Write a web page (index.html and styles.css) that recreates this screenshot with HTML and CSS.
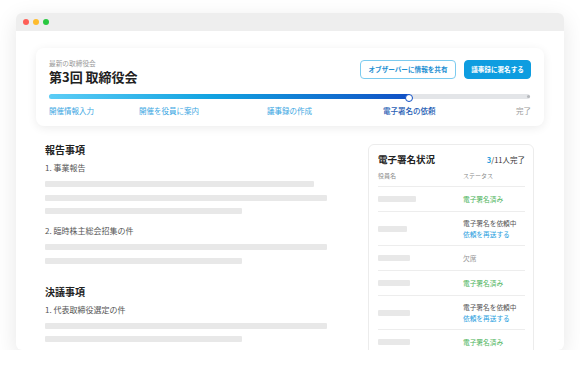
FILE: index.html
```html
<!DOCTYPE html>
<html lang="ja">
<head>
    <meta charset="UTF-8">
    <meta name="viewport" content="width=device-width, initial-scale=1.0">
    <title>第3回 取締役会</title>
    <link rel="stylesheet" href="styles.css">
</head>
<body>

    <div class="window">

        <div class="titlebar">
            <span class="dot red"></span>
            <span class="dot yellow"></span>
            <span class="dot green"></span>
        </div>

        <div class="content">

            <div class="meetingCard">
                <div class="meetingTop">
                    <div>
                        <div class="meetingLabel">最新の取締役会</div>
                        <h1 class="meetingTitle">第3回 取締役会</h1>
                    </div>
                    <div class="actions">
                        <button class="btn btnOutline">オブザーバーに情報を共有</button>
                        <button class="btn btnFilled">議事録に署名する</button>
                    </div>
                </div>

                <div class="track">
                    <div class="trackFill"></div>
                    <span class="trackEnd"></span>
                </div>

                <div class="steps">
                    <span class="step done step1">開催情報入力</span>
                    <span class="step done step2">開催を役員に案内</span>
                    <span class="step done step3">議事録の作成</span>
                    <span class="step current step4">電子署名の依頼</span>
                    <span class="step todo">完了</span>
                </div>
            </div>

            <div class="main">

                <div class="agenda">
                    <h2 class="sectionTitle">報告事項</h2>
                    <div class="item">1. 事業報告</div>
                    <div class="line long"></div>
                    <div class="line full"></div>
                    <div class="line short"></div>

                    <div class="item">2. 臨時株主総会招集の件</div>
                    <div class="line full"></div>
                    <div class="line short"></div>

                    <h2 class="sectionTitle second">決議事項</h2>
                    <div class="item">1. 代表取締役選定の件</div>
                    <div class="line full"></div>
                    <div class="line short"></div>
                </div>

                <div class="signPanel">
                    <div class="panelHead">
                        <span class="panelTitle">電子署名状況</span>
                        <span class="panelCount"><span class="countDone">3</span>/11人完了</span>
                    </div>
                    <div class="row headRow">
                        <span>役員名</span>
                        <span>ステータス</span>
                    </div>
                    <div class="row">
                        <span class="name" style="width:38px"></span>
                        <span class="status signed">電子署名済み</span>
                    </div>
                    <div class="row">
                        <span class="name" style="width:29px"></span>
                        <span class="status">電子署名を依頼中<br><span class="resend">依頼を再送する</span></span>
                    </div>
                    <div class="row">
                        <span class="name" style="width:32px"></span>
                        <span class="status absent">欠席</span>
                    </div>
                    <div class="row">
                        <span class="name" style="width:32px"></span>
                        <span class="status signed">電子署名済み</span>
                    </div>
                    <div class="row">
                        <span class="name" style="width:32px"></span>
                        <span class="status">電子署名を依頼中<br><span class="resend">依頼を再送する</span></span>
                    </div>
                    <div class="row">
                        <span class="name" style="width:32px"></span>
                        <span class="status signed">電子署名済み</span>
                    </div>
                </div>

            </div>
        </div>
    </div>

</body>
</html>
```

FILE: styles.css
```css
:root{
    --font-primary: "Noto Sans CJK JP", "Noto Sans", sans-serif;
    --blue: #0e9de0;
    --blue-text: #2a9fe0;
    --green: #4cb45a;
    --skeleton: #e8e8e8;
}

*{
    box-sizing: border-box;
}

body{
    margin: 0;
    background: #fff;
    font-family: var(--font-primary);
    color: #333;
}

.window{
    width: 548px;
    height: 337px;
    margin: 13px 0 0 16px;
    background: #fff;
    border-radius: 6px;
    overflow: hidden;
    box-shadow: 0 6px 22px rgba(0, 0, 0, 0.1);
}

.titlebar{
    height: 18px;
    background: #eeeeee;
    display: flex;
    align-items: center;
    gap: 4px;
    padding-left: 7px;
}

.dot{
    width: 6px;
    height: 6px;
    border-radius: 50%;
}
.red{ background: #fe5f57; }
.yellow{ background: #febc2e; }
.green{ background: #28c840; }

.content{
    padding: 17px 20px 0 20px;
}

/* meeting card */

.meetingCard{
    border-radius: 8px;
    box-shadow: 0 2px 10px rgba(0, 0, 0, 0.08);
    padding: 10px 13px 10px 13px;
}

.meetingTop{
    display: flex;
    justify-content: space-between;
    align-items: flex-start;
}

.meetingLabel{
    font-size: 6.7px;
    line-height: 10px;
    color: #999;
}

.meetingTitle{
    margin: 0;
    font-size: 13px;
    line-height: 18px;
    font-weight: 700;
    color: #222;
}

.actions{
    display: flex;
    gap: 8px;
    margin-top: 2px;
}

.btn{
    height: 19px;
    padding: 0;
    border-radius: 4px;
    font-family: var(--font-primary);
    font-size: 6.6px;
    font-weight: 700;
    line-height: 1;
    white-space: nowrap;
    text-align: center;
}

.btnOutline{
    width: 96px;
    background: #fff;
    border: 1px solid #7ccbef;
    color: #1d8fd2;
}

.btnFilled{
    width: 67px;
    background: var(--blue);
    border: 1px solid var(--blue);
    color: #fff;
}

.track{
    position: relative;
    height: 5px;
    margin-top: 8px;
    margin-right: 1px;
    border-radius: 3px;
    background: #e3e5e8;
}

.trackFill{
    position: relative;
    width: 75%;
    height: 100%;
    border-radius: 3px;
    background: linear-gradient(90deg, #5ccdf6 0%, #12a3e1 45%, #1150c5 100%);
}

.trackFill::after{
    content: "";
    position: absolute;
    right: -3px;
    top: -0.5px;
    width: 6px;
    height: 6px;
    border-radius: 50%;
    background: #fff;
    border: 1.5px solid #1150c5;
}

.trackEnd{
    position: absolute;
    right: 0.5px;
    top: 1px;
    width: 3px;
    height: 3px;
    border-radius: 50%;
    background: #b5b8bc;
}

.steps{
    display: flex;
    margin-top: 7px;
    font-size: 7.5px;
    line-height: 10px;
}

.step1{ width: 90px; }
.step2{ width: 128px; }
.step3{ width: 116px; }
.step4{ flex: 1; }

.done{ color: #3aa6e2; }
.current{ color: #2a5fb5; font-weight: 500; }
.todo{ color: #9a9a9a; }

/* main area */

.main{
    display: flex;
    gap: 41px;
    padding: 18px 10px 0 9px;
}

.agenda{
    width: 282px;
}

.sectionTitle{
    margin: 0;
    font-size: 10px;
    line-height: 12px;
    font-weight: 700;
    color: #222;
}

.sectionTitle.second{
    margin-top: 22px;
}

.item{
    margin: 7px 0 8px;
    font-size: 8px;
    line-height: 10px;
    color: #555;
}

.line{
    height: 6px;
    margin-bottom: 7.5px;
    border-radius: 1px;
    background: var(--skeleton);
}

.line + .item{
    margin-top: 12px;
}

.long{ width: 269px; }
.full{ width: 282px; }
.short{ width: 197px; }

/* sign status panel */

.signPanel{
    width: 166px;
    height: 230px;
    border: 1px solid #ececec;
    border-radius: 6px;
    padding: 7px 8px 0 9px;
}

.panelHead{
    display: flex;
    justify-content: space-between;
    align-items: baseline;
}

.panelTitle{
    font-size: 9.5px;
    line-height: 14px;
    font-weight: 700;
    color: #222;
}

.panelCount{
    font-size: 7.5px;
    color: #333;
}

.countDone{
    color: var(--blue-text);
    font-weight: 700;
}

.row{
    display: grid;
    grid-template-columns: 85px 1fr;
    align-items: center;
    min-height: 25px;
    padding: 5.5px 0;
    border-top: 1px solid #ededed;
}

.headRow{
    min-height: 0;
    border-top: none;
    padding: 5px 0 6px;
    font-size: 6px;
    line-height: 9px;
    color: #888;
}

.name{
    height: 6px;
    border-radius: 1px;
    background: var(--skeleton);
}

.status{
    font-size: 6.7px;
    line-height: 11px;
    color: #555;
}

.signed{ color: var(--green); }
.absent{ color: #999; }

.resend{
    color: var(--blue-text);
}
```
